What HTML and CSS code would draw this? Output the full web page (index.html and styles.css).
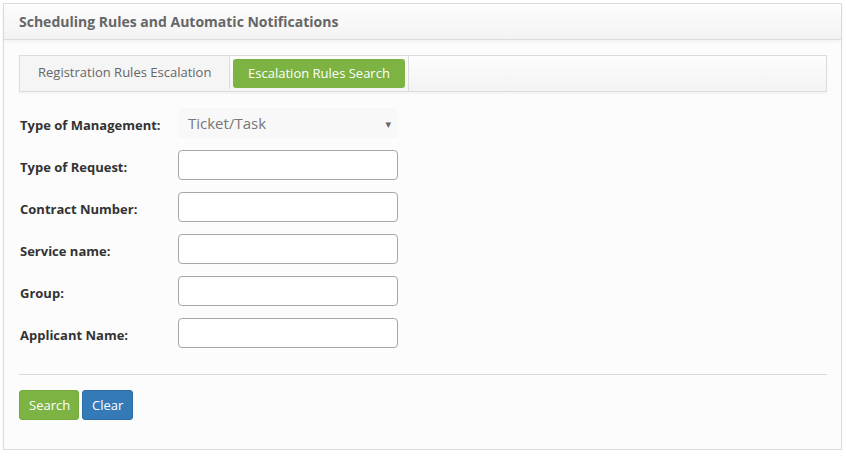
FILE: index.html
```html
<!DOCTYPE html>
<html>
<head>
<meta charset="utf-8">
<title>Scheduling Rules and Automatic Notifications</title>
<link rel="stylesheet" href="styles.css">
</head>
<body>
<div class="panel">
  <div class="panel-head">Scheduling Rules and Automatic Notifications</div>
  <div class="panel-body">
    <div class="tabs">
      <div class="tab">Registration Rules Escalation</div>
      <div class="tab-wrap"><div class="tab-active">Escalation Rules Search</div></div>
    </div>
    <form class="form">
      <div class="row">
        <label class="label">Type of Management:</label>
        <div class="select"><span>Ticket/Task</span><span class="caret">&#9662;</span></div>
      </div>
      <div class="row">
        <label class="label">Type of Request:</label>
        <div class="input"></div>
      </div>
      <div class="row">
        <label class="label">Contract Number:</label>
        <div class="input"></div>
      </div>
      <div class="row">
        <label class="label">Service name:</label>
        <div class="input"></div>
      </div>
      <div class="row">
        <label class="label">Group:</label>
        <div class="input"></div>
      </div>
      <div class="row">
        <label class="label">Applicant Name:</label>
        <div class="input"></div>
      </div>
    </form>
    <div class="divider"></div>
    <div class="actions">
      <button class="btn btn-green" type="button">Search</button>
      <button class="btn btn-blue" type="button">Clear</button>
    </div>
  </div>
</div>
</body>
</html>
```

FILE: styles.css
```css
* { box-sizing: border-box; }
html, body { margin: 0; padding: 0; background: #fff; }
body { font-family: "Open Sans", "DejaVu Sans", sans-serif; font-size: 13px; color: #333; }

.panel {
  margin: 3px 4px 0 3px;
  border: 1px solid #dcdcdc;
  background: #fcfcfc;
  box-shadow: 0 2px 3px rgba(0,0,0,0.06);
}
.panel-head {
  height: 36px;
  border-bottom: 1px solid #dcdcdc;
  background: linear-gradient(#fdfdfd, #f3f3f3);
  padding-left: 15px;
  font-weight: 700;
  font-size: 14px;
  line-height: 35px;
  color: #666;
  box-shadow: 0 2px 3px rgba(0,0,0,0.04);
}
.panel-body {
  padding: 15px 14px 29px 15px;
}
.tabs {
  display: flex;
  align-items: flex-start;
  height: 37px;
  border: 1px solid #dcdcdc;
  background: linear-gradient(#fdfdfd, #f3f3f3);
  box-shadow: 0 2px 2px rgba(0,0,0,0.04);
}
.tab {
  width: 210px;
  height: 33px;
  background: #f5f5f5;
  border-right: 1px solid #dcdcdc;
  color: #666;
  line-height: 33px;
  padding-left: 18px;
  white-space: nowrap;
}
.tab-wrap {
  height: 35px;
  padding: 3px 3px 0 3px;
  border-right: 1px solid #dcdcdc;
}
.tab-active {
  width: 172px;
  height: 29px;
  background: #7cb342;
  border-radius: 3px;
  color: #fff;
  text-align: center;
  line-height: 29px;
  white-space: nowrap;
}

.form {
  margin: 16px 0 0 1px;
  display: flex;
  flex-direction: column;
  gap: 12px;
}
.row {
  display: flex;
  align-items: center;
  height: 30px;
}
.label {
  width: 158px;
  font-weight: 700;
  color: #333;
  padding-top: 3px;
}
.select {
  width: 220px;
  height: 30px;
  background: #f8f8f8;
  border-radius: 4px;
  display: flex;
  align-items: center;
  justify-content: space-between;
  padding: 0 7px 0 10px;
  font-size: 15px;
  color: #777;
}
.caret { font-size: 11px; color: #666; }
.input {
  width: 220px;
  height: 30px;
  background: #fff;
  border: 1px solid #a4a8a8;
  border-radius: 4px;
}
.divider {
  margin-top: 26px;
  height: 1px;
  background: #d8d8d8;
}
.actions {
  margin-top: 15px;
  display: flex;
  gap: 3px;
}
.btn {
  height: 30px;
  border: 1px solid transparent;
  border-radius: 3px;
  font-family: "Open Sans", "DejaVu Sans", sans-serif;
  font-size: 13px;
  color: #fff;
  padding: 0 9px;
  cursor: pointer;
}
.btn-green { background: #7cb342; border-color: #74ab3c; width: 60px; }
.btn-blue { background: #337ab7; border-color: #2e6da4; width: 51px; }
```
